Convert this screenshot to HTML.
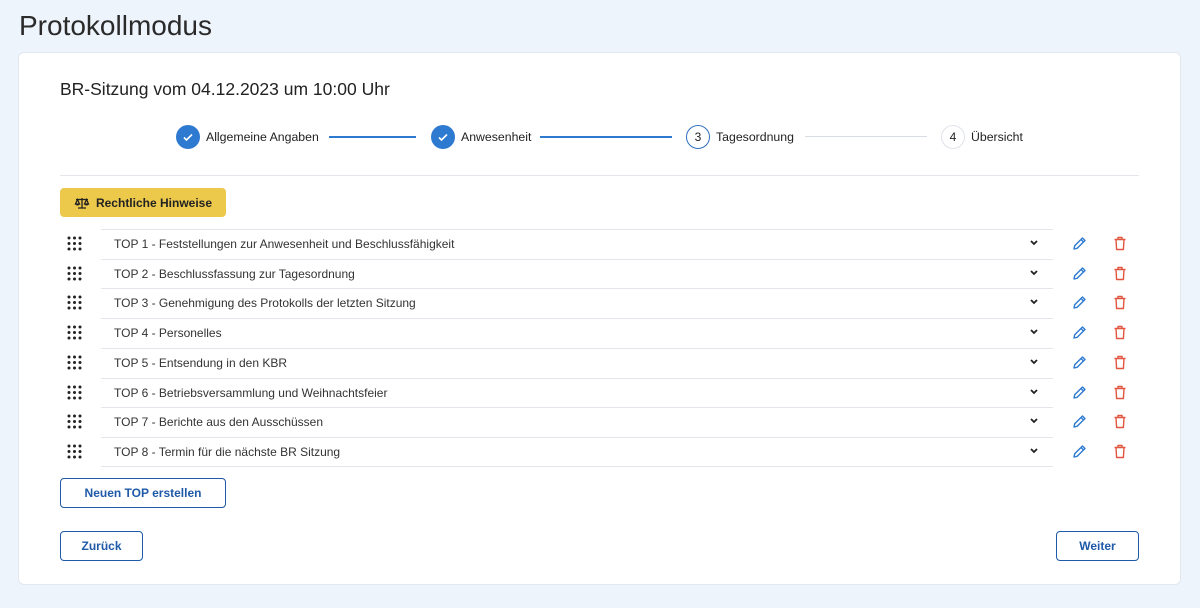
<!DOCTYPE html>
<html><head><meta charset="utf-8"><style>
*{box-sizing:border-box;margin:0;padding:0}
body{width:1200px;height:608px;background:#eef4fc;font-family:"Liberation Sans",sans-serif;position:relative;overflow:hidden;color:#222}
.abs{position:absolute}
h1{position:absolute;left:19px;top:10px;font-size:28px;font-weight:normal;color:#2a2a2a}
.card{position:absolute;left:18px;top:52px;width:1163px;height:533px;background:#fff;border-radius:6px;border:1px solid #e2e8f0}
.title{left:60px;top:79px;font-size:17.5px;color:#222}
.step{position:absolute;top:125px;display:flex;align-items:center;font-size:12.3px;color:#222}
.c{width:24px;height:24px;border-radius:50%;display:flex;align-items:center;justify-content:center;margin-right:6px;font-size:12px}
.line{position:absolute;top:136px;height:2px}
.row{position:absolute;left:101px;width:952px;height:30px;border-top:1px solid #e3e6ea;font-size:12px;color:#333;padding-left:13px;line-height:29px}
.btn{position:absolute;border:1px solid #1e5aa8;border-radius:4px;color:#1e5aa8;font-size:12px;font-weight:bold;display:flex;align-items:center;justify-content:center;background:#fff}
</style></head><body>
<h1>Protokollmodus</h1>
<div class="card"></div>
<div class="abs title">BR-Sitzung vom 04.12.2023 um 10:00 Uhr</div>

<div class="step" style="left:176px"><div class="c" style="background:#2e7ad1"><svg width="12" height="12" viewBox="0 0 12 12"><path d="M2 6.5l2.5 2.5L10 3.5" stroke="#fff" stroke-width="1.6" fill="none"/></svg></div>Allgemeine Angaben</div>
<div class="line" style="left:329px;width:87px;background:#2e7ad1"></div>
<div class="step" style="left:431px"><div class="c" style="background:#2e7ad1"><svg width="12" height="12" viewBox="0 0 12 12"><path d="M2 6.5l2.5 2.5L10 3.5" stroke="#fff" stroke-width="1.6" fill="none"/></svg></div>Anwesenheit</div>
<div class="line" style="left:540px;width:132px;background:#2e7ad1"></div>
<div class="step" style="left:686px"><div class="c" style="border:1.5px solid #2e6fc0">3</div>Tagesordnung</div>
<div class="line" style="left:805px;width:122px;height:1px;background:#d8dde4"></div>
<div class="step" style="left:941px"><div class="c" style="border:1px solid #dfe3e8">4</div>Übersicht</div>
<div class="abs" style="left:60px;top:175px;width:1079px;height:1px;background:#e3e6ea"></div>

<div class="abs" style="left:60px;top:188px;width:166px;height:29px;background:#ecc94b;border-radius:4px;font-size:12px;font-weight:bold;display:flex;align-items:center;justify-content:center;color:#222">
<svg width="16" height="12" viewBox="0 0 16 12" style="margin-right:6px"><path d="M8 1v10M4 11h8M2 2.5h12M3.5 2.5L1.5 7h4zM12.5 2.5L10.5 7h4z" stroke="#222" stroke-width="1.3" fill="none"/><path d="M1.5 7a2 1.5 0 0 0 4 0zM10.5 7a2 1.5 0 0 0 4 0z" fill="#222"/></svg>Rechtliche Hinweise</div>

<div id="rows"></div>
<script>
var t=["TOP 1 - Feststellungen zur Anwesenheit und Beschlussfähigkeit","TOP 2 - Beschlussfassung zur Tagesordnung","TOP 3 - Genehmigung des Protokolls der letzten Sitzung","TOP 4 - Personelles","TOP 5 - Entsendung in den KBR","TOP 6 - Betriebsversammlung und Weihnachtsfeier","TOP 7 - Berichte aus den Ausschüssen","TOP 8 - Termin für die nächste BR Sitzung"];
var h="";
for(var i=0;i<8;i++){var y=229+i*29.7;
h+='<div class="row" style="top:'+y+'px">'+t[i]+'</div>';
h+='<svg class="abs" style="left:67px;top:'+(y+7)+'px" width="16" height="16" viewBox="0 0 16 16" fill="#222">';
for(var a=0;a<3;a++)for(var b=0;b<3;b++)h+='<circle cx="'+(2+a*5.5)+'" cy="'+(2+b*5.5)+'" r="1.5"/>';
h+='</svg>';
h+='<svg class="abs" style="left:1029px;top:'+(y+10)+'px" width="10" height="8" viewBox="0 0 10 8"><path d="M2 2l3 3 3-3" stroke="#222" stroke-width="1.8" fill="none"/></svg>';
h+='<svg class="abs" style="left:1072px;top:'+(y+7)+'px" width="15" height="15" viewBox="0 0 15 15"><path d="M2 13l.7-3.2L10.5 2l2.5 2.5-7.8 7.8zM9 3.5l2.5 2.5" stroke="#2e7ad1" stroke-width="1.4" fill="none" stroke-linejoin="round"/></svg>';
h+='<svg class="abs" style="left:1113px;top:'+(y+7)+'px" width="14" height="15" viewBox="0 0 14 15"><path d="M1.5 3.5h11M5 3.5V1.5h4v2M3 3.5l.6 10h6.8l.6-10" stroke="#e2553f" stroke-width="1.4" fill="none" stroke-linejoin="round"/></svg>';
}
h+='<div class="abs" style="left:101px;top:466px;width:952px;height:1px;background:#e3e6ea"></div>';
document.getElementById("rows").innerHTML=h;
</script>

<div class="btn" style="left:60px;top:478px;width:166px;height:30px">Neuen TOP erstellen</div>
<div class="btn" style="left:60px;top:531px;width:83px;height:30px">Zurück</div>
<div class="btn" style="left:1056px;top:531px;width:83px;height:30px">Weiter</div>
</body></html>
